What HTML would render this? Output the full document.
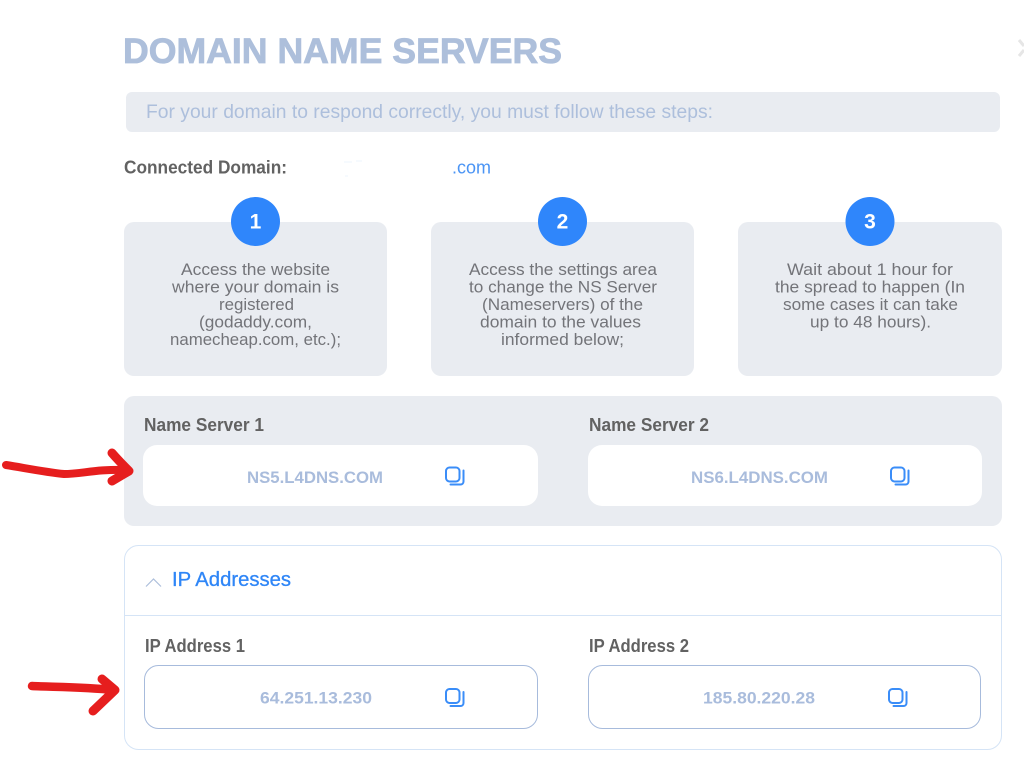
<!DOCTYPE html>
<html lang="en">
<head>
<meta charset="utf-8">
<title>Domain Name Servers</title>
<style>
html,body{margin:0;padding:0;background:#fff;width:1024px;height:765px;overflow:hidden}
svg{display:block}
text{font-family:"Liberation Sans",sans-serif}
.s{font-size:17px;fill:#737479}
.l{font-size:18px;font-weight:bold;fill:#626262}
.v{font-size:16.5px;font-weight:bold;fill:#a9bcdc}
.n{font-size:21px;font-weight:bold;fill:#fff}
</style>
</head>
<body>
<svg xmlns="http://www.w3.org/2000/svg" width="1024" height="765" viewBox="0 0 1024 765">
<defs>
<g id="copy" fill="none" stroke="#3a8df8" stroke-width="2" stroke-linecap="round">
<rect x="0.500" y="0.500" width="13.500" height="14" rx="3.500"/>
<path d="M18 3.500V14.500a3 3 0 0 1-3 3H5"/>
</g>
</defs>

<text x="123" y="63" font-size="35" font-weight="bold" fill="#adbfdb" stroke="#adbfdb" stroke-width="0.800" textLength="439" lengthAdjust="spacingAndGlyphs">DOMAIN NAME SERVERS</text>
<path d="M1019 40l5 6m0 4l-5 6" fill="none" stroke="#e6e6e6" stroke-width="3"/>

<rect x="126" y="92" width="874" height="40" rx="6" fill="#e9ecf1"/>
<text x="146" y="118" font-size="19.500" fill="#adbfdc" textLength="567" lengthAdjust="spacingAndGlyphs">For your domain to respond correctly, you must follow these steps:</text>

<text x="124" y="173.500" class="l" textLength="163" lengthAdjust="spacingAndGlyphs">Connected Domain:</text>
<text x="452" y="173.500" font-size="18" fill="#4a94f5" textLength="39" lengthAdjust="spacingAndGlyphs">.com</text>
<path d="M344 162h8M356 161h6M345 176h3" stroke="#eef4fd" stroke-width="1"/>

<rect x="124" y="222" width="263" height="154" rx="10" fill="#e9ecf1"/>
<rect x="431" y="222" width="263" height="154" rx="10" fill="#e9ecf1"/>
<rect x="738" y="222" width="264" height="154" rx="10" fill="#e9ecf1"/>
<circle cx="255.500" cy="221.500" r="24.500" fill="#2f86fb"/>
<circle cx="562.500" cy="221.500" r="24.500" fill="#2f86fb"/>
<circle cx="870" cy="221.500" r="24.500" fill="#2f86fb"/>
<text x="255.500" y="228.500" class="n" text-anchor="middle">1</text>
<text x="562.500" y="228.500" class="n" text-anchor="middle">2</text>
<text x="870" y="228.500" class="n" text-anchor="middle">3</text>

<text x="181" y="275" class="s" textLength="149" lengthAdjust="spacingAndGlyphs">Access the website</text>
<text x="172" y="292.500" class="s" textLength="167" lengthAdjust="spacingAndGlyphs">where your domain is</text>
<text x="219" y="310" class="s" textLength="75" lengthAdjust="spacingAndGlyphs">registered</text>
<text x="199" y="327.500" class="s" textLength="113" lengthAdjust="spacingAndGlyphs">(godaddy.com,</text>
<text x="170" y="345" class="s" textLength="171" lengthAdjust="spacingAndGlyphs">namecheap.com, etc.);</text>

<text x="469" y="275" class="s" textLength="188" lengthAdjust="spacingAndGlyphs">Access the settings area</text>
<text x="469" y="292.500" class="s" textLength="188" lengthAdjust="spacingAndGlyphs">to change the NS Server</text>
<text x="482" y="310" class="s" textLength="161" lengthAdjust="spacingAndGlyphs">(Nameservers) of the</text>
<text x="480" y="327.500" class="s" textLength="161" lengthAdjust="spacingAndGlyphs">domain to the values</text>
<text x="501" y="345" class="s" textLength="123" lengthAdjust="spacingAndGlyphs">informed below;</text>

<text x="787" y="275" class="s" textLength="166" lengthAdjust="spacingAndGlyphs">Wait about 1 hour for</text>
<text x="775" y="292.500" class="s" textLength="190" lengthAdjust="spacingAndGlyphs">the spread to happen (In</text>
<text x="783" y="310" class="s" textLength="175" lengthAdjust="spacingAndGlyphs">some cases it can take</text>
<text x="810" y="327.500" class="s" textLength="121" lengthAdjust="spacingAndGlyphs">up to 48 hours).</text>

<rect x="124" y="396" width="878" height="130" rx="10" fill="#e9ecf1"/>
<text x="144" y="431" class="l" textLength="120" lengthAdjust="spacingAndGlyphs">Name Server 1</text>
<text x="589" y="431" class="l" textLength="120" lengthAdjust="spacingAndGlyphs">Name Server 2</text>
<rect x="143" y="445" width="395" height="61" rx="14" fill="#fff"/>
<rect x="588" y="445" width="394" height="61" rx="14" fill="#fff"/>
<text x="247" y="483" class="v" textLength="136" lengthAdjust="spacingAndGlyphs">NS5.L4DNS.COM</text>
<text x="691" y="483" class="v" textLength="137" lengthAdjust="spacingAndGlyphs">NS6.L4DNS.COM</text>
<use href="#copy" x="445.500" y="467"/>
<use href="#copy" x="890.500" y="467"/>

<rect x="124.500" y="545.500" width="877" height="204" rx="14" fill="#fff" stroke="#d5e4f6"/>
<path d="M125 615.500H1001" stroke="#d5e4f6" stroke-width="1"/>
<path d="M146 586.500l7.500-7.500 7.500 7.500" fill="none" stroke="#adbfdb" stroke-width="1.200"/>
<text x="172" y="586" font-size="20.500" fill="#2f86f7" stroke="#2f86f7" stroke-width="0.300" textLength="119" lengthAdjust="spacingAndGlyphs">IP Addresses</text>
<text x="145" y="652" class="l" textLength="100" lengthAdjust="spacingAndGlyphs">IP Address 1</text>
<text x="589" y="652" class="l" textLength="100" lengthAdjust="spacingAndGlyphs">IP Address 2</text>
<rect x="144.500" y="665.500" width="393" height="63" rx="14" fill="#fff" stroke="#a7bbdc"/>
<rect x="588.500" y="665.500" width="392" height="63" rx="14" fill="#fff" stroke="#a7bbdc"/>
<text x="260" y="703.500" class="v" textLength="112" lengthAdjust="spacingAndGlyphs">64.251.13.230</text>
<text x="703" y="703.500" class="v" textLength="112" lengthAdjust="spacingAndGlyphs">185.80.220.28</text>
<use href="#copy" x="445.500" y="688.500"/>
<use href="#copy" x="888.500" y="688.500"/>

<g fill="none" stroke="#e61e1e" stroke-linecap="round" stroke-linejoin="round">
<path d="M6 465C25 468 45 472 64 474C82 474 95 469 127 470" stroke-width="8"/>
<path d="M112 453C118 460 124 466 129 471L112 481" stroke-width="9"/>
<path d="M32 686C55 687 85 687 114 690" stroke-width="8.500"/>
<path d="M102 679L115 690L93 711" stroke-width="9"/>
</g>
</svg>
</body>
</html>
